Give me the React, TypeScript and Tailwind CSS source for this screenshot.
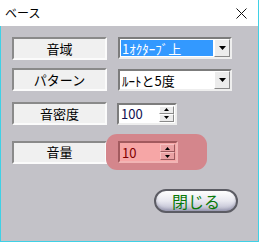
import React from "react";

const font = { fontFamily: '"Noto Sans CJK JP", "Noto Sans", sans-serif' };

function Label({ text }: { text: string }) {
  return (
    <div className="w-[95px] h-[23px] flex items-center justify-center bg-[#f0f0f0] border-2 border-t-[#8a8a8a] border-l-[#8a8a8a] border-b-[#fbfbfb] border-r-[#fbfbfb] text-[13px] text-black">
      {text}
    </div>
  );
}

function Combo({ text, selected }: { text: string; selected?: boolean }) {
  return (
    <div className="w-[114px] h-[22px] flex bg-white border-2 border-t-[#7c7c7c] border-l-[#7c7c7c] border-b-[#eeeeee] border-r-[#eeeeee]">
      <div className="flex-1 p-px">
        <div
          className={
            "h-full flex items-center px-px text-[13px] leading-none " +
            (selected ? "bg-[#3399ff] text-white" : "text-black")
          }
        >
          {text}
        </div>
      </div>
      <div className="w-[16px] h-full flex items-center justify-center bg-[#ececec] border border-t-white border-l-white border-b-[#8a8a8a] border-r-[#8a8a8a]">
        <svg width="7" height="4" viewBox="0 0 7 4">
          <polygon points="0,0 7,0 3.5,4" fill="#000" />
        </svg>
      </div>
    </div>
  );
}

function Spin({ value, pink }: { value: string; pink?: boolean }) {
  const box = pink
    ? "bg-[#f6a6a6] border-t-[#a25a5e] border-l-[#a25a5e] border-b-[#f2b4b4] border-r-[#f2b4b4]"
    : "bg-white border-t-[#7c7c7c] border-l-[#7c7c7c] border-b-[#eeeeee] border-r-[#eeeeee]";
  const btn = pink
    ? "bg-[#eaa2a4] border-t-[#f6c0c0] border-l-[#f6c0c0] border-b-[#9a5a5e] border-r-[#9a5a5e]"
    : "bg-[#ececec] border-t-white border-l-white border-b-[#8a8a8a] border-r-[#8a8a8a]";
  return (
    <div className={"w-[60px] h-[22px] flex border-2 " + box}>
      <div
        className={
          "flex-1 flex items-center pl-[2px] text-[13px] leading-none " +
          (pink ? "text-[#800000]" : "text-[#101050]")
        }
      >
        {value}
      </div>
      <div className="w-[15px] flex flex-col mr-px py-px">
        <div className={"flex-1 flex items-center justify-center border " + btn}>
          <svg width="5" height="3" viewBox="0 0 5 3">
            <polygon points="2.5,0 5,3 0,3" fill="#000" />
          </svg>
        </div>
        <div className={"flex-1 flex items-center justify-center border " + btn}>
          <svg width="5" height="3" viewBox="0 0 5 3">
            <polygon points="0,0 5,0 2.5,3" fill="#000" />
          </svg>
        </div>
      </div>
    </div>
  );
}

export default function App() {
  return (
    <div className="w-[259px] h-[242px] flex flex-col bg-white" style={font}>
      {/* title bar */}
      <div className="h-[26px] flex items-center justify-between pl-[5px] pr-[11px] bg-white border-r border-[#3fd1e6]">
        <span className="text-[12px] text-black">ベース</span>
        <svg width="11" height="11" viewBox="0 0 11 11">
          <path d="M0.5 0.5L10.5 10.5M10.5 0.5L0.5 10.5" stroke="#111" strokeWidth="1" />
        </svg>
      </div>

      {/* body */}
      <div className="flex-1 flex flex-col bg-[#c3c2c8] border-l border-r border-b border-[#3fd1e6] pl-[11px] pt-[11px]">
        <div className="flex items-start">
          <Label text="音域" />
          <div className="ml-[11px]">
            <Combo text="1ｵｸﾀｰﾌﾞ上" selected />
          </div>
        </div>

        <div className="flex items-start mt-[8px]">
          <Label text="パターン" />
          <div className="ml-[11px] mt-px">
            <Combo text="ﾙｰﾄと5度" />
          </div>
        </div>

        <div className="flex items-center mt-[11px]">
          <Label text="音密度" />
          <div className="ml-[10px]">
            <Spin value="100" />
          </div>
        </div>

        <div className="flex items-center mt-[9px]">
          <Label text="音量" />
          <div className="-ml-px w-[101px] h-[36px] flex items-center pl-[12px] rounded-[11px] bg-[#d4868c]">
            <Spin value="10" pink />
          </div>
        </div>

        <div className="flex justify-end pr-[20px] mt-[19px]">
          <button className="w-[84px] h-[24px] flex items-center justify-center rounded-full border-2 border-[#5c5c64] bg-gradient-to-b from-[#ffffff] via-[#e8e8f0] to-[#b8b8cc] text-[#0a7a0a] text-[16px] leading-none shadow-[inset_0_-2px_3px_rgba(90,90,120,0.35)]">
            閉じる
          </button>
        </div>
      </div>
    </div>
  );
}
